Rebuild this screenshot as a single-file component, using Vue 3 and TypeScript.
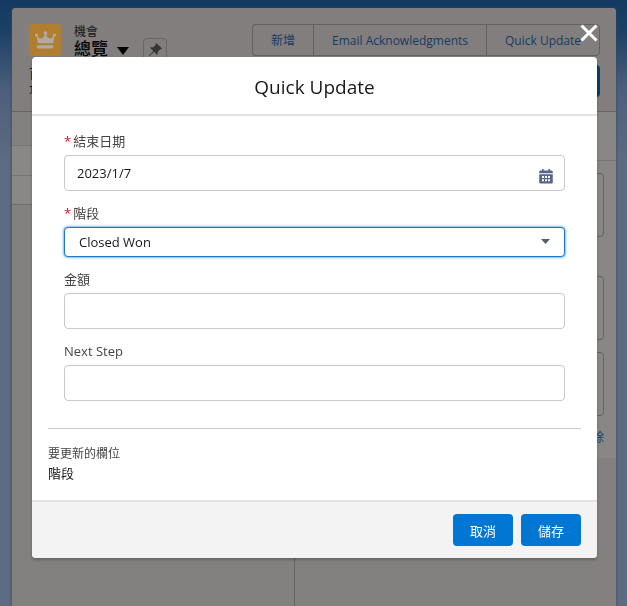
<script setup lang="ts">
import { reactive } from 'vue'

const actions: string[] = ['新增', 'Email Acknowledgments', 'Quick Update']
const stages: string[] = ['Closed Won']
const form = reactive({ closeDate: '2023/1/7', stage: 'Closed Won', amount: '', nextStep: '' })
</script>

<template>
  <div class="app">
    <main class="page">
      <header class="page-header">
        <div class="title-row">
          <span class="crown">
            <svg viewBox="0 0 32 32" width="32" height="32" aria-hidden="true">
              <path d="M8.6 21.2h14.8c.5 0 .8.3.8.8v.8c0 1-.7 1.7-1.7 1.7h-13c-1 0-1.7-.7-1.7-1.7V22c0-.5.3-.8.8-.8z" />
              <path d="M25.4 9.4c-.9 0-1.6.7-1.6 1.6 0 .5.2.9.5 1.2-.8 1.5-2 2.3-3.4 2.2-1.7-.1-3.1-1.5-3.5-3.6.6-.3 1-.9 1-1.6 0-1.1-.9-1.9-1.9-1.9s-1.9.8-1.9 1.9c0 .7.4 1.3 1 1.6-.4 2.1-1.8 3.5-3.5 3.6-1.4.1-2.6-.7-3.4-2.2.3-.3.5-.7.5-1.2 0-.9-.7-1.6-1.6-1.6S6 10.100 6 11s.7 1.600 1.600 1.600l1.100 5.900c.1.400.4.700.8.700h14c.4 0 .7-.3.8-.7l1.100-5.900c.9 0 1.600-.7 1.600-1.600s-.7-1.600-1.600-1.600z" />
            </svg>
          </span>
          <div class="titles">
            <span class="object">機會</span>
            <h1>總覽</h1>
          </div>
          <svg class="caret" viewBox="0 0 12 8" width="12" height="8" aria-hidden="true"><path d="M0 0h12L6 8z" /></svg>
          <button class="pin" type="button" aria-label="釘選">
            <svg viewBox="0 0 16 16" width="16" height="16" aria-hidden="true">
              <path d="M9.700 1.300l5 5c.3.300.1.800-.3.900l-1.200.1-2.500 2.500.1 2.500c0 .4-.5.7-.8.4L7 9.700l-4.800 4.500c-.3.200-.6-.1-.4-.4L6.300 9 3.300 6c-.3-.3 0-.8.4-.8l2.500.1 2.500-2.500.1-1.200c.1-.5.6-.6.9-.3z" />
            </svg>
          </button>
          <div class="actions">
            <button v-for="a in actions" :key="a" type="button">{{ a }}</button>
          </div>
        </div>
        <div class="meta-row">
          <p>百<br />項</p>
          <span class="tab"></span>
        </div>
      </header>
      <div class="columns">
        <section class="list">
          <div class="row"></div>
          <div class="row"></div>
        </section>
        <section class="detail">
          <div class="detail-panel">
            <div class="detail-head"></div>
            <div class="tile first"></div>
            <div class="tile spaced"></div>
            <div class="tile"></div>
            <a class="remove" href="#">除</a>
          </div>
        </section>
      </div>
    </main>

    <div class="overlay">
      <button class="close" type="button" aria-label="關閉">
        <svg viewBox="0 0 18 18" width="18" height="18" aria-hidden="true"><path d="M1.500 1.500l15 15M16.500 1.500l-15 15" /></svg>
      </button>
      <div class="modal" role="dialog" aria-modal="true" aria-labelledby="dlg-title">
        <header class="modal-header"><h2 id="dlg-title">Quick Update</h2></header>
        <form id="update" class="modal-body" @submit.prevent>
          <div class="fields">
            <div class="field">
              <label for="date"><abbr>*</abbr>結束日期</label>
              <div class="control">
                <input id="date" v-model="form.closeDate" type="text" required />
                <svg class="calendar" viewBox="0 0 14 15" width="14" height="15" aria-hidden="true">
                  <path fill-rule="evenodd" d="M3 0h1.600v1.500h4.800V0H11v1.500h1.300c.9 0 1.500.6 1.500 1.500v1.200H.2V3c0-.9.6-1.500 1.500-1.500H3zM.2 5.200h13.600v8c0 .8-.6 1.400-1.400 1.400H1.600c-.8 0-1.400-.6-1.400-1.400zM3 7v2h2V7zm3 0v2h2V7zm3 0v2h2V7zm-6 3.200v2h2v-2zm3 0v2h2v-2zm3 0v2h2v-2z" />
                </svg>
              </div>
            </div>
            <div class="field">
              <label for="stage"><abbr>*</abbr>階段</label>
              <div class="control">
                <select id="stage" v-model="form.stage" required>
                  <option v-for="s in stages" :key="s">{{ s }}</option>
                </select>
                <svg class="arrow" viewBox="0 0 9 5" width="9" height="5" aria-hidden="true"><path d="M0 0h9L4.500 5z" /></svg>
              </div>
            </div>
            <div class="field">
              <label for="amount">金額</label>
              <div class="control"><input id="amount" v-model="form.amount" type="text" /></div>
            </div>
            <div class="field">
              <label for="next">Next Step</label>
              <div class="control"><input id="next" v-model="form.nextStep" type="text" /></div>
            </div>
          </div>
          <div class="summary">
            <p class="summary-label">要更新的欄位</p>
            <p class="summary-value">階段</p>
          </div>
        </form>
        <footer class="modal-footer">
          <button type="button">取消</button>
          <button type="submit" form="update">儲存</button>
        </footer>
      </div>
    </div>
  </div>
</template>

<style>
body {
  margin: 0;
  background: #5d6b82;
}
</style>

<style scoped>
.app {
  box-sizing: border-box;
  height: 100vh;
  overflow: hidden;
  padding: 8px 11px 0 12px;
  background: linear-gradient(180deg, #123a60 0, #1b4066 30px, #4d5f7c 90px, #5d6b80 160px, #5d6b80 100%);
  font-family: "Open Sans", "Noto Sans CJK TC", sans-serif;
  font-size: 13px;
  color: #181818;
}
.app * {
  box-sizing: border-box;
}
h1,
h2,
p {
  margin: 0;
  font-weight: 400;
}
button,
input,
select {
  font: inherit;
}
.page {
  display: flex;
  flex-direction: column;
  height: 100%;
  background: #838080;
  border-radius: 4px 4px 0 0;
  box-shadow: 0 0 3px #3c4654;
}
.page-header {
  height: 104px;
  flex: none;
  padding: 16px 16px 16px 17px;
  background: #827e7e;
  border-bottom: 1px solid #676464;
  border-radius: 4px 4px 0 0;
}
.title-row {
  display: flex;
  height: 36px;
}
.crown {
  width: 32px;
  height: 32px;
  border-radius: 4px;
  background: #b17d2f;
}
.crown svg {
  display: block;
  fill: #b0aaa5;
}
.titles {
  margin-left: 13px;
}
.object {
  display: block;
  font-size: 12px;
  line-height: 15px;
}
h1 {
  font-size: 17px;
  font-weight: 500;
  line-height: 20px;
  color: #040404;
}
.caret {
  margin: 23px 14px 0 9px;
}
.pin {
  width: 24px;
  height: 24px;
  margin-top: 14px;
  padding: 3px;
  border: 1px solid #696666;
  border-radius: 4px;
  background: none;
}
.pin svg {
  display: block;
  fill: #363636;
}
.actions {
  display: flex;
  height: 32px;
  margin-left: auto;
}
.actions button {
  padding: 0 18px;
  border: 1px solid #636161;
  border-right-width: 0;
  background: none;
  color: #173a63;
  font-size: 12px;
  white-space: nowrap;
}
.actions button:first-child {
  border-radius: 4px 0 0 4px;
}
.actions button:last-child {
  border-right-width: 1px;
  border-radius: 0 4px 4px 0;
}
.meta-row {
  display: flex;
  justify-content: space-between;
  padding-top: 5px;
  line-height: 17px;
}
.tab {
  width: 24px;
  height: 32px;
  border-radius: 4px;
  background: #083f69;
}
.columns {
  display: flex;
  flex: 1;
}
.list {
  flex: 282;
  padding-top: 33px;
  border-right: 1px solid #656363;
}
.row {
  height: 30px;
  border-top: 1px solid #777474;
  background: #8a8787;
}
.row:last-child {
  border-bottom: 1px solid #706d6d;
}
.detail {
  flex: 321;
}
.detail-panel {
  display: flex;
  flex-direction: column;
  height: 346px;
  background: #898786;
}
.detail-head {
  height: 49px;
  border-bottom: 1px solid #777474;
}
.tile {
  height: 64px;
  margin: 12px 12px 0;
  border: 1px solid #656363;
  border-radius: 4px;
}
.tile.spaced {
  margin-top: 39px;
}
.remove {
  align-self: flex-end;
  margin: 13px 12px 0;
  color: #173a63;
  font-size: 12px;
  line-height: 18px;
  text-decoration: none;
}
.overlay {
  position: fixed;
  inset: 0;
  display: flex;
  flex-direction: column;
  padding: 24px 30px 48px 32px;
}
.close {
  align-self: flex-end;
  flex: none;
  width: 18px;
  height: 18px;
  margin: 0 -1px 15px 0;
  padding: 0;
  border: 0;
  background: none;
}
.close svg {
  display: block;
  fill: none;
  stroke: #fff;
  stroke-width: 3;
}
.modal {
  border-radius: 4px;
  background: #fff;
  box-shadow: 0 2px 3px rgba(0, 0, 0, 0.24);
}
.modal-header {
  padding: 16px 16px 13px;
  border-bottom: 2px solid #e2e2e2;
  text-align: center;
}
h2 {
  font-size: 19px;
  line-height: 28px;
}
.modal-body {
  padding: 15px 16px;
}
.fields {
  padding: 0 16px 15px;
  border-bottom: 1px solid #c9c9c9;
}
.field {
  padding-bottom: 12px;
}
label {
  display: block;
  margin-bottom: 3px;
  line-height: 21px;
  color: #444;
}
abbr {
  margin-right: 2px;
  color: #c2182b;
}
.control {
  position: relative;
}
input,
select {
  display: block;
  width: 100%;
  height: 36px;
  padding: 0 12px;
  border: 1px solid #c9c9c9;
  border-radius: 4px;
  background: #fff;
  color: #181818;
  outline: none;
}
select {
  height: 30px;
  padding: 0 14px;
  border-color: #1b78cb;
  box-shadow: 0 0 3px #0176d3;
  appearance: none;
}
.calendar,
.arrow {
  position: absolute;
  pointer-events: none;
}
.calendar {
  top: 14px;
  right: 12px;
  fill: #56658a;
}
.arrow {
  top: 12px;
  right: 15px;
  fill: #56606c;
}
.summary {
  padding: 16px 0 2px;
}
.summary-label {
  font-size: 12px;
  line-height: 18px;
  color: #444;
}
.summary-value {
  line-height: 20px;
}
.modal-footer {
  display: flex;
  justify-content: flex-end;
  gap: 8px;
  padding: 12px 16px;
  border-top: 2px solid #e2e2e2;
  border-radius: 0 0 4px 4px;
  background: #f3f3f3;
}
.modal-footer button {
  height: 32px;
  padding: 0 17px;
  border: 0;
  border-radius: 4px;
  background: #0176d3;
  color: #fff;
}
</style>
